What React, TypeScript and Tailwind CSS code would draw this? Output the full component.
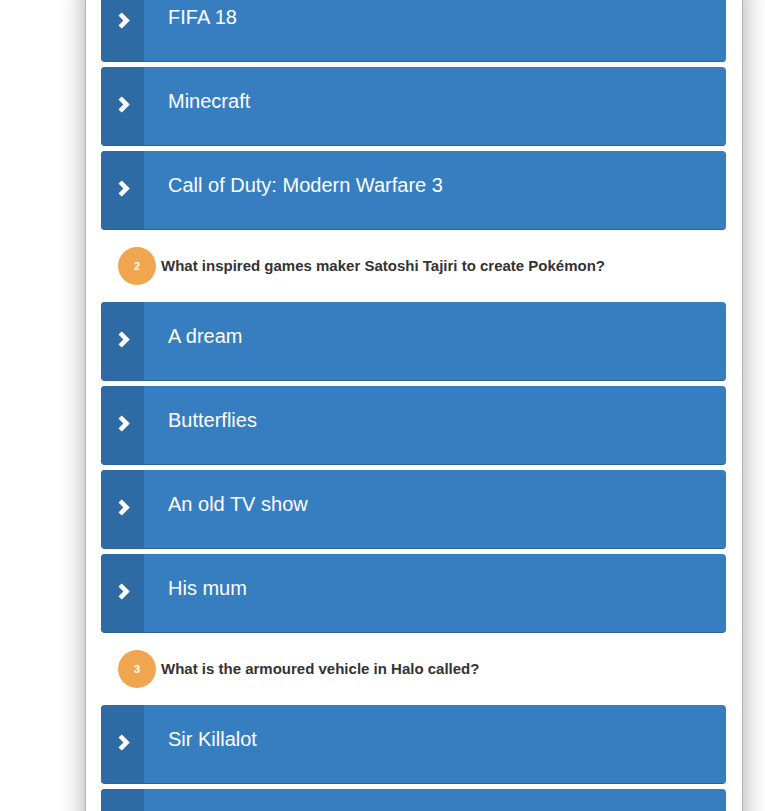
const questions = [
  {
    n: 1,
    text: "",
    answers: ["FIFA 18", "Minecraft", "Call of Duty: Modern Warfare 3"],
  },
  {
    n: 2,
    text: "What inspired games maker Satoshi Tajiri to create Pokémon?",
    answers: ["A dream", "Butterflies", "An old TV show", "His mum"],
  },
  {
    n: 3,
    text: "What is the armoured vehicle in Halo called?",
    answers: ["Sir Killalot", "Warthog"],
  },
];

function Chevron() {
  return (
    <svg width="13" height="17" viewBox="0 0 13 17" className="block">
      <path d="M0.5 3.6 L3.8 0.5 L11.8 8.5 L3.8 16.5 L0.5 13.4 L5.4 8.5 Z" fill="white" />
    </svg>
  );
}

function Answer({ label }: { label: string }) {
  return (
    <button className="flex h-[79px] w-full overflow-hidden rounded-[4px] border-b border-[#2b6298] bg-[#377ec1] text-left">
      <span className="flex w-[43px] shrink-0 justify-center bg-[#2e6aa3] pl-[3px] pt-[29px]">
        <Chevron />
      </span>
      <span className="pl-[24px] pt-[20px] text-[20px] leading-[28px] text-white">{label}</span>
    </button>
  );
}

export default function App() {
  return (
    <div className="h-[811px] overflow-hidden bg-white font-['Liberation_Sans',Arial,sans-serif]">
      <div className="ml-[85px] min-h-[811px] w-[658px] border-x border-[#b5b5b5] bg-white pl-[15px] pr-[16px] shadow-[0_0_24px_rgba(0,0,0,0.35)]">
        {questions.map((q) => (
          <div key={q.n}>
            {q.n > 1 && (
              <div className="flex items-center gap-[5px] pb-[17px] pl-[17px] pt-[17px]">
                <span className="flex h-[38px] w-[38px] items-center justify-center rounded-full bg-[#f0a64e] text-[11px] font-bold text-white">
                  {q.n}
                </span>
                <span className="text-[15px] font-semibold text-[#333]">{q.text}</span>
              </div>
            )}
            <div className={`flex flex-col gap-[5px] ${q.n === 1 ? "-mt-[17px]" : ""}`}>
              {q.answers.map((a) => (
                <Answer key={a} label={a} />
              ))}
            </div>
          </div>
        ))}
      </div>
    </div>
  );
}
